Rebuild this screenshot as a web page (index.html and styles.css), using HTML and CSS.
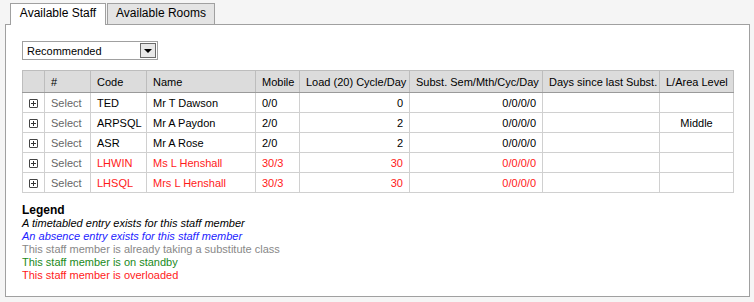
FILE: index.html
```html
<!DOCTYPE html>
<html lang="en">
<head>
  <meta charset="UTF-8" />
  <title>Substitute Staff</title>
  <link rel="stylesheet" href="styles.css">
</head>
<body>

  <div class="page">
    <ul class="tabs">
      <li class="tab active">Available Staff</li>
      <li class="tab">Available Rooms</li>
    </ul>

    <div class="panel">
      <div class="dropdown">
        <span class="dropdown-text">Recommended</span>
        <span class="dropdown-arrow"></span>
      </div>

      <table class="staff-table">
        <colgroup>
          <col class="col-expand">
          <col class="col-select">
          <col class="col-code">
          <col class="col-name">
          <col class="col-mobile">
          <col class="col-load">
          <col class="col-subst">
          <col class="col-days">
          <col class="col-level">
        </colgroup>
        <thead>
          <tr>
            <th class="expand"></th>
            <th>#</th>
            <th>Code</th>
            <th>Name</th>
            <th>Mobile</th>
            <th>Load (20) Cycle/Day</th>
            <th>Subst. Sem/Mth/Cyc/Day</th>
            <th>Days since last Subst.</th>
            <th>L/Area Level</th>
          </tr>
        </thead>
        <tbody>
          <tr>
            <td class="expand"><span class="plus"></span></td>
            <td class="select">Select</td>
            <td>TED</td>
            <td>Mr T Dawson</td>
            <td>0/0</td>
            <td class="num">0</td>
            <td class="num">0/0/0/0</td>
            <td></td>
            <td class="center"></td>
          </tr>
          <tr>
            <td class="expand"><span class="plus"></span></td>
            <td class="select">Select</td>
            <td>ARPSQL</td>
            <td>Mr A Paydon</td>
            <td>2/0</td>
            <td class="num">2</td>
            <td class="num">0/0/0/0</td>
            <td></td>
            <td class="center">Middle</td>
          </tr>
          <tr>
            <td class="expand"><span class="plus"></span></td>
            <td class="select">Select</td>
            <td>ASR</td>
            <td>Mr A Rose</td>
            <td>2/0</td>
            <td class="num">2</td>
            <td class="num">0/0/0/0</td>
            <td></td>
            <td class="center"></td>
          </tr>
          <tr class="overloaded">
            <td class="expand"><span class="plus"></span></td>
            <td class="select">Select</td>
            <td>LHWIN</td>
            <td>Ms L Henshall</td>
            <td>30/3</td>
            <td class="num">30</td>
            <td class="num">0/0/0/0</td>
            <td></td>
            <td class="center"></td>
          </tr>
          <tr class="overloaded">
            <td class="expand"><span class="plus"></span></td>
            <td class="select">Select</td>
            <td>LHSQL</td>
            <td>Mrs L Henshall</td>
            <td>30/3</td>
            <td class="num">30</td>
            <td class="num">0/0/0/0</td>
            <td></td>
            <td class="center"></td>
          </tr>
        </tbody>
      </table>

      <div class="legend">
        <div class="legend-title">Legend</div>
        <div class="legend-timetabled">A timetabled entry exists for this staff member</div>
        <div class="legend-absence">An absence entry exists for this staff member</div>
        <div class="legend-taking">This staff member is already taking a substitute class</div>
        <div class="legend-standby">This staff member is on standby</div>
        <div class="legend-overloaded">This staff member is overloaded</div>
      </div>
    </div>
  </div>

</body>
</html>
```

FILE: styles.css
```css
body {
  margin: 0;
  font-family: "Liberation Sans", Arial, sans-serif;
  font-size: 11px;
  color: #000;
  background-color: #f5f5f5;
}

.page {
  padding: 3px 5px 0 5px;
}

/* tabs */
.tabs {
  list-style: none;
  margin: 0 0 0 5px;
  padding: 0;
  display: flex;
  position: relative;
  z-index: 1;
}

.tab {
  height: 20px;
  line-height: 19px;
  border: 1px solid #a0a0a0;
  border-bottom: none;
  background-color: #e4e4e4;
  text-align: center;
  font-size: 12px;
  width: 106px;
  margin-left: 1px;
}

.tab.active {
  background-color: #fff;
  width: 94px;
  height: 21px;
  margin: 0 0 -1px 0;
}

/* panel */
.panel {
  box-sizing: border-box;
  width: 745px;
  height: 273px;
  border: 1px solid #a0a0a0;
  background-color: #fff;
  padding: 16px 16px 0 16px;
}

.dropdown {
  box-sizing: border-box;
  width: 136px;
  height: 19px;
  border: 1px solid #a0a0a0;
  display: flex;
  align-items: center;
  justify-content: space-between;
  padding: 0 1px 0 4px;
  font-size: 11px;
}

.dropdown-arrow {
  box-sizing: border-box;
  width: 16px;
  height: 15px;
  border: 1px solid #6a6a6a;
  background-color: #e8e8e8;
  position: relative;
}

.dropdown-arrow::after {
  content: "";
  position: absolute;
  left: 3px;
  top: 5px;
  border-left: 4px solid transparent;
  border-right: 4px solid transparent;
  border-top: 4px solid #000;
}

/* table */
.staff-table {
  margin-top: 10px;
  border-collapse: collapse;
  width: 711px;
  table-layout: fixed;
  border: 1px solid #a0a0a0;
}

.col-expand { width: 22px; }
.col-select { width: 46px; }
.col-code { width: 56px; }
.col-name { width: 109px; }
.col-mobile { width: 44px; }
.col-load { width: 110px; }
.col-subst { width: 133px; }
.col-days { width: 117px; }
.col-level { width: 74px; }

.staff-table th {
  height: 21px;
  padding: 0 6px;
  background-color: #dcdcdc;
  font-weight: normal;
  text-align: left;
  white-space: nowrap;
  overflow: hidden;
  border: 1px solid #bdbdbd;
  border-bottom: 1px solid #9a9a9a;
}

.staff-table td {
  height: 19px;
  padding: 0 6px;
  white-space: nowrap;
  overflow: hidden;
  border: 1px solid #d0d0d0;
}

.staff-table th.expand,
.staff-table td.expand {
  padding: 0;
  text-align: center;
}

.plus {
  display: inline-block;
  box-sizing: border-box;
  width: 9px;
  height: 9px;
  border: 1px solid #444;
  border-radius: 1px;
  position: relative;
  vertical-align: -1px;
}

.plus::before,
.plus::after {
  content: "";
  position: absolute;
  background-color: #333;
}

.plus::before {
  left: 1px;
  top: 3px;
  width: 5px;
  height: 1px;
}

.plus::after {
  left: 3px;
  top: 1px;
  width: 1px;
  height: 5px;
}

.staff-table td.select {
  color: #666;
}

.staff-table td.num {
  text-align: right;
}

.staff-table td.center {
  text-align: center;
}

.staff-table tr.overloaded td {
  color: #ff1a1a;
}

.staff-table tr.overloaded td.select {
  color: #666;
}

/* legend */
.legend {
  margin-top: 10px;
  line-height: 13px;
}

.legend-title {
  font-weight: bold;
  font-size: 12px;
  line-height: 14px;
}

.legend-timetabled {
  font-style: italic;
}

.legend-absence {
  font-style: italic;
  color: #2222ff;
}

.legend-taking {
  color: #888;
}

.legend-standby {
  color: #1a8a1a;
}

.legend-overloaded {
  color: #ff1a1a;
}
```
